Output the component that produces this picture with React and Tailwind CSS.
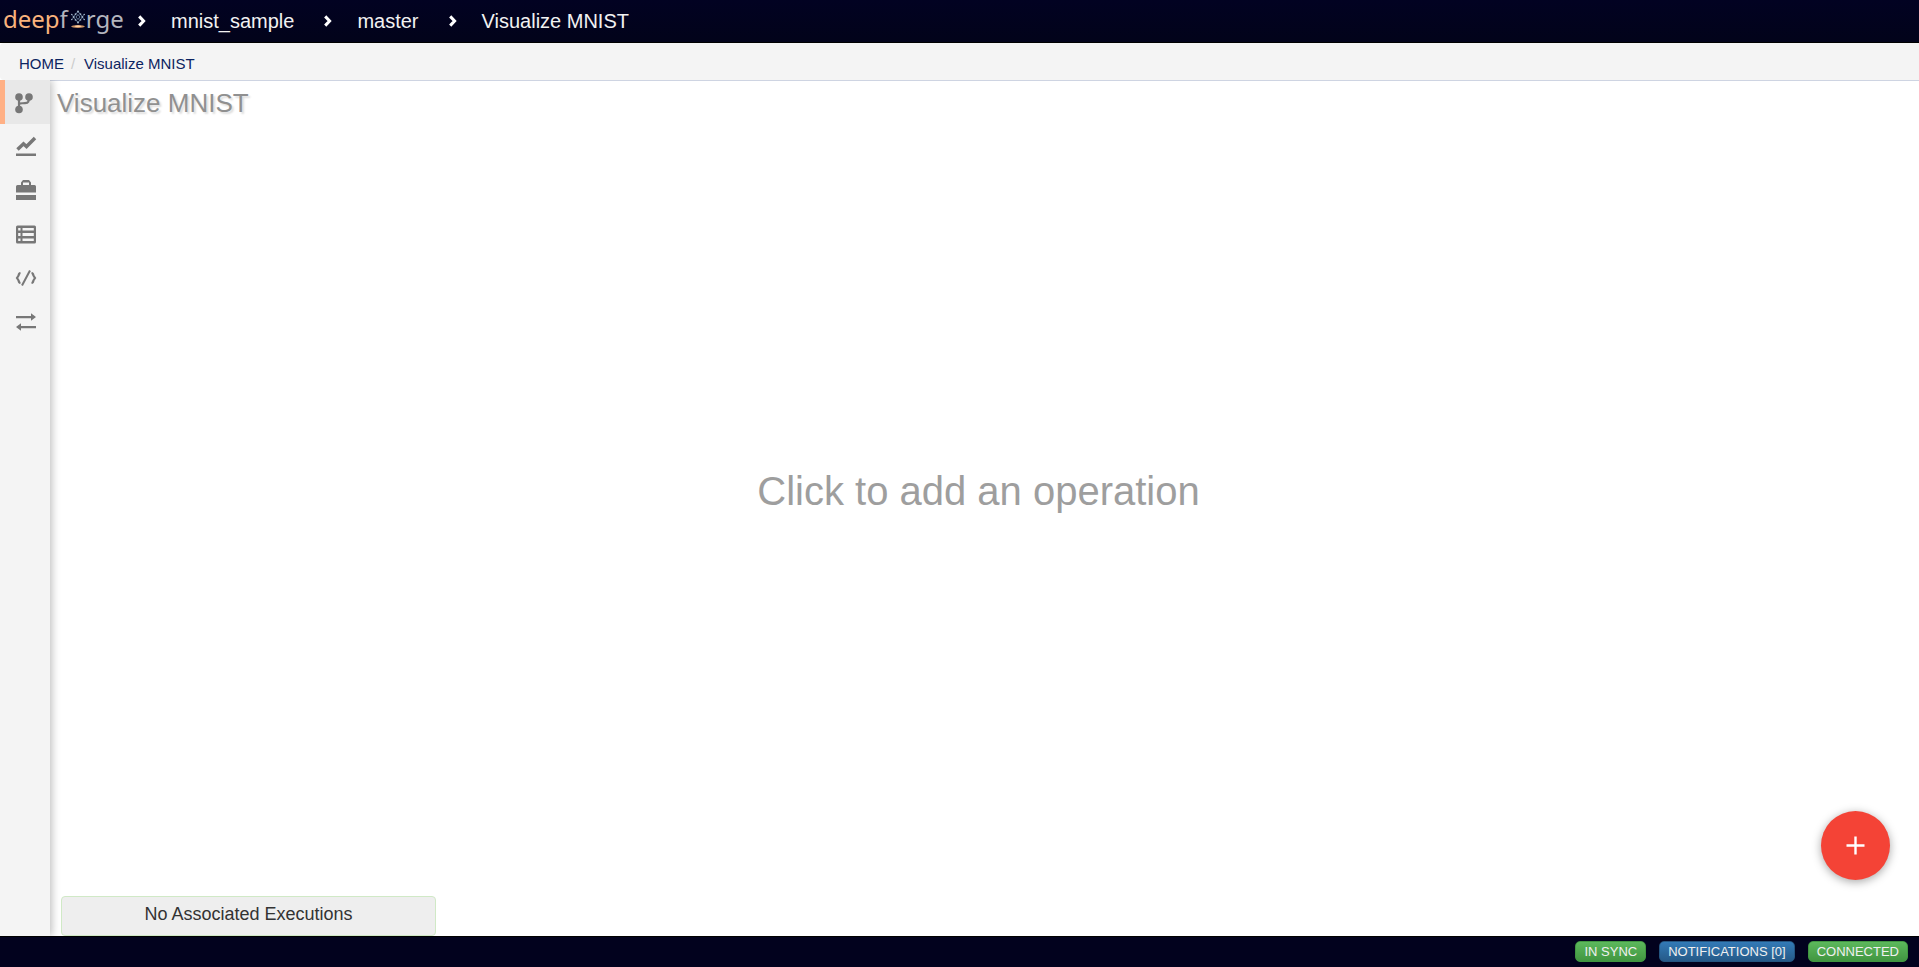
import React from "react";

const projectPath = ["mnist_sample", "master", "Visualize MNIST"];

function Chevron() {
  return (
    <svg className="h-3 w-2 shrink-0" viewBox="0 0 8 12" fill="none" stroke="#fff" strokeWidth="3" aria-hidden="true">
      <path d="M1.2 1.4 5.6 6 1.2 10.6" />
    </svg>
  );
}

function Emblem() {
  return (
    <svg className="ml-0.5 h-5 w-4 shrink-0" viewBox="0 0 16 20" aria-hidden="true">
      <g fill="none" stroke="#6a86a3" strokeWidth="0.9">
        <path d="M8 2.500 12.500 8 8 13.500 3.500 8Z" />
        <path d="M8 5.500 10 8 8 10.500 6 8Z" />
        <path d="M1.500 5.500 4.500 8 1.500 10.500M14.500 5.500 11.500 8 14.500 10.500" opacity="0.7" />
      </g>
      <g fill="#9fb3c6">
        <circle cx="8" cy="2.500" r="1" />
        <circle cx="5.500" cy="5.200" r="0.9" />
        <circle cx="10.500" cy="5.200" r="0.9" />
        <circle cx="1.800" cy="5.500" r="0.8" />
        <circle cx="14.200" cy="5.500" r="0.8" />
        <circle cx="3.500" cy="8" r="0.9" />
        <circle cx="12.500" cy="8" r="0.9" />
        <circle cx="1.800" cy="10.500" r="0.8" />
        <circle cx="14.200" cy="10.500" r="0.8" />
        <circle cx="5.500" cy="10.800" r="0.9" />
        <circle cx="10.500" cy="10.800" r="0.9" />
        <circle cx="8" cy="13.500" r="1" />
      </g>
      <ellipse cx="8" cy="17.500" rx="6.800" ry="1.400" fill="#c98f62" />
      <ellipse cx="8" cy="17.300" rx="3.500" ry="0.800" fill="#ffd0a0" />
    </svg>
  );
}

function Logo() {
  return (
    <a href="#home" aria-label="deepforge" className="flex w-[129px] shrink-0 items-center pb-1 pl-[3px] font-['Noto_Sans','Open_Sans',sans-serif] text-2xl leading-8">
      <span className="text-[#f9b27c]">deep</span>
      <span className="text-[#b3b5bd]">f</span>
      <Emblem />
      <span className="text-[#b3b5bd]">rge</span>
    </a>
  );
}

const navItems = [
  {
    label: "Pipelines",
    active: true,
    icon: (
      <>
        <g fill="none" stroke="currentColor" strokeWidth="2.200">
          <path d="M4 5V19M4 14.500C4 11.500 6 12.500 10 12.200C13.500 12 14 11 14 5" />
        </g>
        <circle cx="4" cy="6" r="3.800" />
        <circle cx="14" cy="6" r="3.800" />
        <circle cx="4" cy="18.500" r="3.800" />
      </>
    ),
  },
  {
    label: "Executions",
    icon: (
      <>
        <path d="M2 19.500H22V22H2Z" />
        <path d="M3.500 15.500 9.500 9.800 12.500 12.500 21 4" fill="none" stroke="currentColor" strokeWidth="3.500" />
      </>
    ),
  },
  {
    label: "Resources",
    icon: (
      <>
        <path d="M3.500 7H7V4.500L9 2H15L17 4.500V7H20.500Q22 7 22 8.500V14.500H2V8.500Q2 7 3.500 7ZM9 7H15V4.500H9Z" fillRule="evenodd" />
        <path d="M2 17H22V22H2Z" />
      </>
    ),
  },
  {
    label: "Artifacts",
    icon: (
      <path d="M3.500 3.500H20.500Q22 3.500 22 5V20Q22 21.500 20.500 21.500H3.500Q2 21.500 2 20V5Q2 3.500 3.500 3.500ZM4.200 6V8.500H6.500V6ZM8.500 6V8.500H19.800V6ZM4.200 11V14H6.500V11ZM8.500 11V14H19.800V11ZM4.200 16.500V19H6.500V16.500ZM8.500 16.500V19H19.800V16.500Z" fillRule="evenodd" />
    ),
  },
  {
    label: "Custom code",
    icon: (
      <g fill="none" stroke="currentColor">
        <path d="M6.500 7Q4.800 7.200 4.600 9.500L3 12 4.600 14.500Q4.800 16.800 6.500 17M17.500 7Q19.200 7.200 19.400 9.500L21 12 19.400 14.500Q19.200 16.800 17.500 17" strokeWidth="2.200" />
        <path d="M16 4.500 8 19.500" strokeWidth="2" />
      </g>
    ),
  },
  {
    label: "Import and export",
    icon: (
      <>
        <path d="M2 6H17V3.200L22 7 17 10.800V8.200H2Z" />
        <path d="M22 16H7V13.200L2 17 7 20.800V18.200H22Z" />
      </>
    ),
  },
];

function Sidebar() {
  return (
    <nav aria-label="Views" className="z-10 w-[50px] shrink-0 bg-[#f4f4f4] shadow-[2px_0_8px_rgba(0,0,0,0.25)]">
      {navItems.map(({ label, active, icon }) => (
        <button
          key={label}
          type="button"
          aria-label={label}
          className={
            active
              ? "flex h-11 w-full items-center border-l-[5px] border-[#ffb085] bg-[#e8e8e8] pt-0.5 pl-2 text-[#777]"
              : "flex h-11 w-full items-center pl-[14px] text-[#777]"
          }
        >
          <svg className="size-6" viewBox={active ? "-2 0 24 24" : "0 0 24 24"} fill="currentColor" aria-hidden="true">
            {icon}
          </svg>
        </button>
      ))}
    </nav>
  );
}

const badge = "h-[21px] rounded-[5px] border px-2 text-[13px] leading-[18px] text-[#f0f0f0]";
const green = "border-[#419641] bg-linear-to-b from-[#5cb85c] to-[#419641]";
const blue = "border-[#245580] bg-linear-to-b from-[#337ab7] to-[#265a88]";

export default function App() {
  return (
    <div className="flex h-screen flex-col bg-white font-['Liberation_Sans',Arial,sans-serif]">
      <header className="flex h-[43px] shrink-0 items-center border-b border-black bg-linear-to-b from-[#020222] to-[#02031a] text-xl text-[#f2f2f2]">
        <Logo />
        <ol className="flex items-center">
          {projectPath.map((name) => (
            <li key={name} className="flex items-center pl-[9px]">
              <Chevron />
              <a href={"#" + name} className="pr-[21px] pl-[25px]">{name}</a>
            </li>
          ))}
        </ol>
      </header>

      <nav aria-label="Breadcrumb" className="flex h-[37px] shrink-0 items-center rounded-l bg-[#f4f4f4] pt-[5px] pl-[19px] text-[15px] text-[#0c2461]">
        <a href="#home">HOME</a>
        <span className="w-5 pl-[7px] text-[#ccc]">/</span>
        <a href="#pipeline">Visualize MNIST</a>
      </nav>

      <div className="flex min-h-0 flex-1 overflow-hidden">
        <Sidebar />
        <main className="relative flex min-w-0 flex-1 flex-col border-t border-[#ced4e2]">
          <h1 className="pt-1 pl-[7px] text-[26px] leading-9 text-[#909090] [text-shadow:2px_2px_2px_#ddd]">Visualize MNIST</h1>
          <div className="flex flex-1 items-center justify-center pr-3 pb-9">
            <button type="button" className="text-[40px] leading-[48px] text-[#9e9e9e]">Click to add an operation</button>
          </div>
          <section className="ml-[11px] h-10 w-[375px] rounded border border-[#d0e9c6] bg-[#eee] text-center text-lg leading-[34px] text-[#333]">
            No Associated Executions
          </section>
          <button
            type="button"
            aria-label="Add operation"
            className="absolute right-[29px] bottom-14 flex size-[69px] items-center justify-center rounded-full bg-[#f44336] shadow-[0_2px_10px_rgba(0,0,0,0.35)]"
          >
            <svg className="size-5" viewBox="0 0 20 20" stroke="#fff" strokeWidth="2.400" aria-hidden="true">
              <path d="M0.500 9.500H18.500M9.500 0.500V18.500" />
            </svg>
          </button>
        </main>
      </div>

      <footer className="flex h-[31px] shrink-0 items-center justify-end gap-[13px] border-t border-black bg-[#02021e] pr-[11px] pb-px">
        <button type="button" className={badge + " " + green}>IN SYNC</button>
        <button type="button" className={badge + " " + blue}>NOTIFICATIONS [0]</button>
        <button type="button" className={badge + " " + green}>CONNECTED</button>
      </footer>
    </div>
  );
}
